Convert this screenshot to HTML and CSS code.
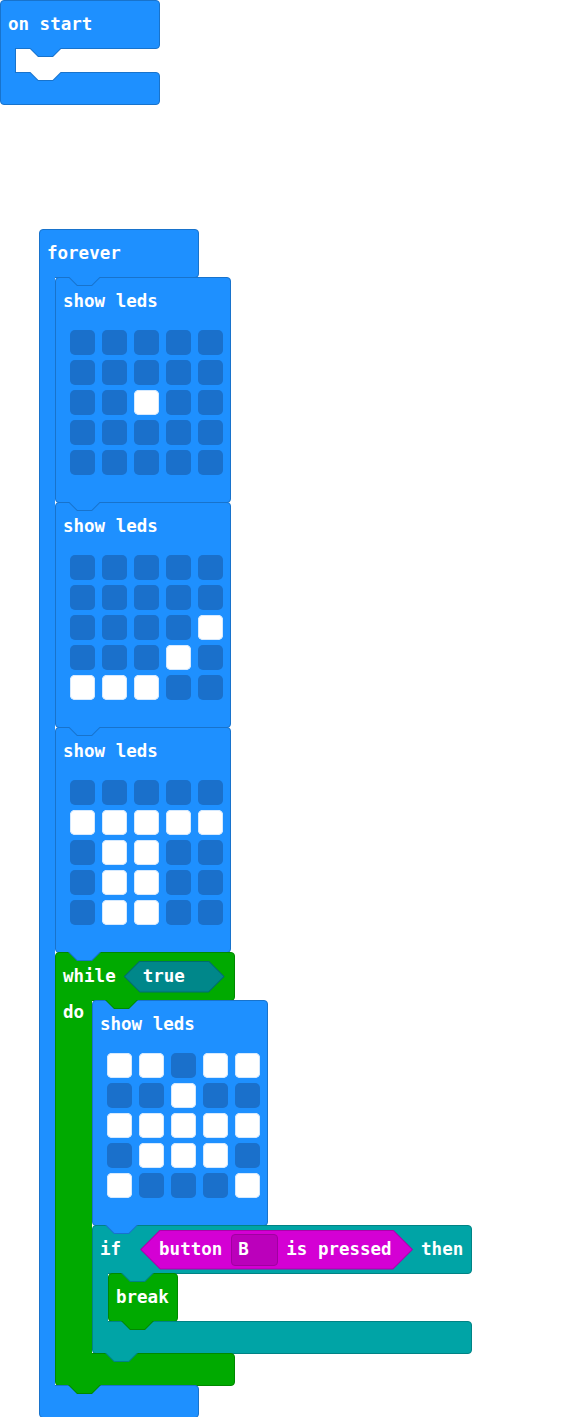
FILE: index.html
```html
<!DOCTYPE html>
<html lang="en">
<head>
    <meta charset="UTF-8">
    <meta name="viewport" content="width=device-width, initial-scale=1.0">
    <title>Blocks</title>
    <link rel="stylesheet" href="styles.css">
</head>
<body>
<div class="workspace">

    <!-- on start -->
    <div class="stack stack-start">
        <div class="cblock event basic">
            <div class="arm arm-top mouth-top"><span class="label">on start</span></div>
            <div class="mouth">
                <div class="spine spine-empty"></div>
                <div class="slot"></div>
            </div>
            <div class="arm arm-bottom slot-end"></div>
        </div>
    </div>

    <!-- forever -->
    <div class="stack stack-forever">
        <div class="cblock event basic">
            <div class="arm arm-top mouth-top"><span class="label">forever</span></div>
            <div class="mouth">
                <div class="spine"></div>
                <div class="stmts">

                    <div class="block leds-block basic has-next">
                        <div class="block-head"><span class="label">show leds</span></div>
                        <div class="leds">
                            <span class="led"></span><span class="led"></span><span class="led"></span><span class="led"></span><span class="led"></span>
                            <span class="led"></span><span class="led"></span><span class="led"></span><span class="led"></span><span class="led"></span>
                            <span class="led"></span><span class="led"></span><span class="led on"></span><span class="led"></span><span class="led"></span>
                            <span class="led"></span><span class="led"></span><span class="led"></span><span class="led"></span><span class="led"></span>
                            <span class="led"></span><span class="led"></span><span class="led"></span><span class="led"></span><span class="led"></span>
                        </div>
                    </div>

                    <div class="block leds-block basic has-next">
                        <div class="block-head"><span class="label">show leds</span></div>
                        <div class="leds">
                            <span class="led"></span><span class="led"></span><span class="led"></span><span class="led"></span><span class="led"></span>
                            <span class="led"></span><span class="led"></span><span class="led"></span><span class="led"></span><span class="led"></span>
                            <span class="led"></span><span class="led"></span><span class="led"></span><span class="led"></span><span class="led on"></span>
                            <span class="led"></span><span class="led"></span><span class="led"></span><span class="led on"></span><span class="led"></span>
                            <span class="led on"></span><span class="led on"></span><span class="led on"></span><span class="led"></span><span class="led"></span>
                        </div>
                    </div>

                    <div class="block leds-block basic has-next">
                        <div class="block-head"><span class="label">show leds</span></div>
                        <div class="leds">
                            <span class="led"></span><span class="led"></span><span class="led"></span><span class="led"></span><span class="led"></span>
                            <span class="led on"></span><span class="led on"></span><span class="led on"></span><span class="led on"></span><span class="led on"></span>
                            <span class="led"></span><span class="led on"></span><span class="led on"></span><span class="led"></span><span class="led"></span>
                            <span class="led"></span><span class="led on"></span><span class="led on"></span><span class="led"></span><span class="led"></span>
                            <span class="led"></span><span class="led on"></span><span class="led on"></span><span class="led"></span><span class="led"></span>
                        </div>
                    </div>

                    <!-- while -->
                    <div class="cblock while-block loops">
                        <div class="arm arm-top mouth-top">
                            <span class="label">while</span>
                            <span class="hex hex-true"><span class="hex-in"><span class="label">true</span></span></span>
                        </div>
                        <div class="mouth">
                            <div class="spine"><span class="label">do</span></div>
                            <div class="stmts">

                                <div class="block leds-block basic has-next">
                                    <div class="block-head"><span class="label">show leds</span></div>
                                    <div class="leds">
                                        <span class="led on"></span><span class="led on"></span><span class="led"></span><span class="led on"></span><span class="led on"></span>
                                        <span class="led"></span><span class="led"></span><span class="led on"></span><span class="led"></span><span class="led"></span>
                                        <span class="led on"></span><span class="led on"></span><span class="led on"></span><span class="led on"></span><span class="led on"></span>
                                        <span class="led"></span><span class="led on"></span><span class="led on"></span><span class="led on"></span><span class="led"></span>
                                        <span class="led on"></span><span class="led"></span><span class="led"></span><span class="led"></span><span class="led on"></span>
                                    </div>
                                </div>

                                <!-- if -->
                                <div class="cblock if-block logic">
                                    <div class="arm arm-top mouth-top">
                                        <span class="label">if</span>
                                        <span class="hex hex-button input">
                                            <span class="hex-in">
                                                <span class="label">button</span>
                                                <span class="dropdown"><span class="label">B</span></span>
                                                <span class="label pressed">is pressed</span>
                                            </span>
                                        </span>
                                        <span class="label then">then</span>
                                    </div>
                                    <div class="mouth">
                                        <div class="spine"></div>
                                        <div class="stmts">
                                            <div class="block break-block loops has-next">
                                                <span class="label">break</span>
                                            </div>
                                        </div>
                                    </div>
                                    <div class="arm arm-bottom has-next"></div>
                                </div>

                            </div>
                        </div>
                        <div class="arm arm-bottom has-next"></div>
                    </div>

                </div>
            </div>
            <div class="arm arm-bottom"></div>
        </div>
    </div>

</div>
</body>
</html>
```

FILE: styles.css
```css
html, body {
    margin: 0;
    height: 100%;
    overflow: hidden;
    background: #fff;
}
body {
    font-family: "DejaVu Sans Mono", monospace;
    font-weight: bold;
    font-size: 17.5px;
    color: #fff;
}

/* category colours */
.basic { --fill: #1e90ff; --edge: #1873cc; }
.loops { --fill: #00aa00; --edge: #008800; }
.logic { --fill: #00a4a6; --edge: #008385; }
.input { --fill: #d400d4; --edge: #aa00aa; }

.workspace {
    position: relative;
    width: 575px;
    height: 1417px;
}
.stack {
    position: absolute;
}
.stack-start { left: 0; top: 0; }
.stack-forever { left: 39px; top: 229px; }

.label {
    white-space: pre;
    line-height: 1;
}

/* c-shaped blocks */
.event { --spine: 16px; --arm: 160px; }
.while-block { --spine: 37px; --arm: 180px; }
.if-block { --spine: 16px; --arm: 380px; }

.cblock {
    display: flex;
    flex-direction: column;
    align-items: flex-start;
    position: relative;
}
.arm {
    position: relative;
    box-sizing: border-box;
    width: var(--arm);
    background: var(--fill);
    border: 1px solid var(--edge);
}
.arm-top {
    height: 49px;
    display: flex;
    align-items: center;
    padding-left: 7px;
    border-radius: 4px 4px 4px 0;
}
.arm-bottom {
    height: 33px;
    margin-top: -1px;
    border-radius: 0 4px 4px 4px;
}
.mouth {
    display: flex;
    margin-top: -1px;
}
.spine {
    position: relative;
    z-index: 1;
    box-sizing: border-box;
    width: var(--spine);
    background: var(--fill);
    border-left: 1px solid var(--edge);
    padding: 2px 0 0 7px;
}
.spine-empty {
    border-right: 1px solid var(--edge);
}
.slot {
    height: 25px;
}
.stmts {
    display: flex;
    flex-direction: column;
    align-items: flex-start;
}
.stmts > * + * {
    margin-top: -1px;
}

/* plain statement blocks */
.block {
    position: relative;
    box-sizing: border-box;
    background: var(--fill);
    border: 1px solid var(--edge);
    border-radius: 4px;
}
.leds-block {
    width: 176px;
    height: 226px;
}
.block-head {
    height: 47px;
    display: flex;
    align-items: center;
    padding-left: 7px;
}
.leds {
    display: grid;
    grid-template-columns: repeat(5, 25px);
    grid-auto-rows: 25px;
    column-gap: 7px;
    row-gap: 5px;
    margin: 5px 0 0 14px;
}
.led {
    background: #1a70cb;
    border-radius: 5px;
}
.led.on {
    background: #fff;
    box-shadow: inset 0 0 0 1px #d4e9ff;
}
.break-block {
    width: 70px;
    height: 49px;
    display: flex;
    align-items: center;
    padding-left: 7px;
}

/* connection tabs */
.has-next::before, .has-next::after,
.mouth-top::before, .mouth-top::after,
.slot-end::before, .slot-end::after {
    content: "";
    position: absolute;
    z-index: 2;
    width: 33px;
    height: 9px;
}
.has-next::before, .mouth-top::before, .slot-end::before {
    background: var(--edge);
    clip-path: polygon(0 0, 33px 0, 24px 9px, 9px 9px);
}
.has-next::after, .mouth-top::after, .slot-end::after {
    background: var(--fill);
    clip-path: polygon(1.4px 0, 31.6px 0, 23.6px 8px, 9.4px 8px);
}
.has-next::before, .has-next::after {
    left: 12px;
    top: 100%;
}
.mouth-top::before, .mouth-top::after {
    left: calc(var(--spine) + 12px);
    top: 100%;
}
.slot-end::before, .slot-end::after {
    left: calc(var(--spine) + 12px);
    top: -1px;
}
.slot-end::after {
    background: #fff;
}

/* hexagon inputs */
.hex {
    --s: 16px;
    display: inline-flex;
    box-sizing: border-box;
    padding: 1px 0;
    background: var(--hex-edge);
    clip-path: polygon(0 50%, var(--s) 0, calc(100% - var(--s)) 0, 100% 50%, calc(100% - var(--s)) 100%, var(--s) 100%);
}
.hex-in {
    display: flex;
    align-items: center;
    width: 100%;
    box-sizing: border-box;
    background: var(--hex-fill);
    clip-path: polygon(1.4px 50%, calc(var(--s) + 0.4px) 0, calc(100% - var(--s) - 0.4px) 0, calc(100% - 1.4px) 50%, calc(100% - var(--s) - 0.4px) 100%, calc(var(--s) + 0.4px) 100%);
}
.hex-true {
    --hex-fill: #00878a;
    --hex-edge: #006c6e;
    width: 101px;
    height: 32px;
    margin-left: 8px;
}
.hex-true .hex-in {
    padding-left: 19px;
}
.hex-button {
    --s: 20px;
    --hex-fill: #d400d4;
    --hex-edge: #aa00aa;
    width: 273px;
    height: 40px;
    margin-left: 19px;
}
.hex-button .hex-in {
    padding-left: 19px;
}
.dropdown {
    display: flex;
    align-items: center;
    box-sizing: border-box;
    width: 47px;
    height: 32px;
    margin-left: 9px;
    padding-left: 6px;
    background: #bb00bb;
    border: 1px solid #a000a0;
    border-radius: 4px;
}
.pressed {
    margin-left: 8px;
}
.then {
    margin-left: 8px;
}
```
